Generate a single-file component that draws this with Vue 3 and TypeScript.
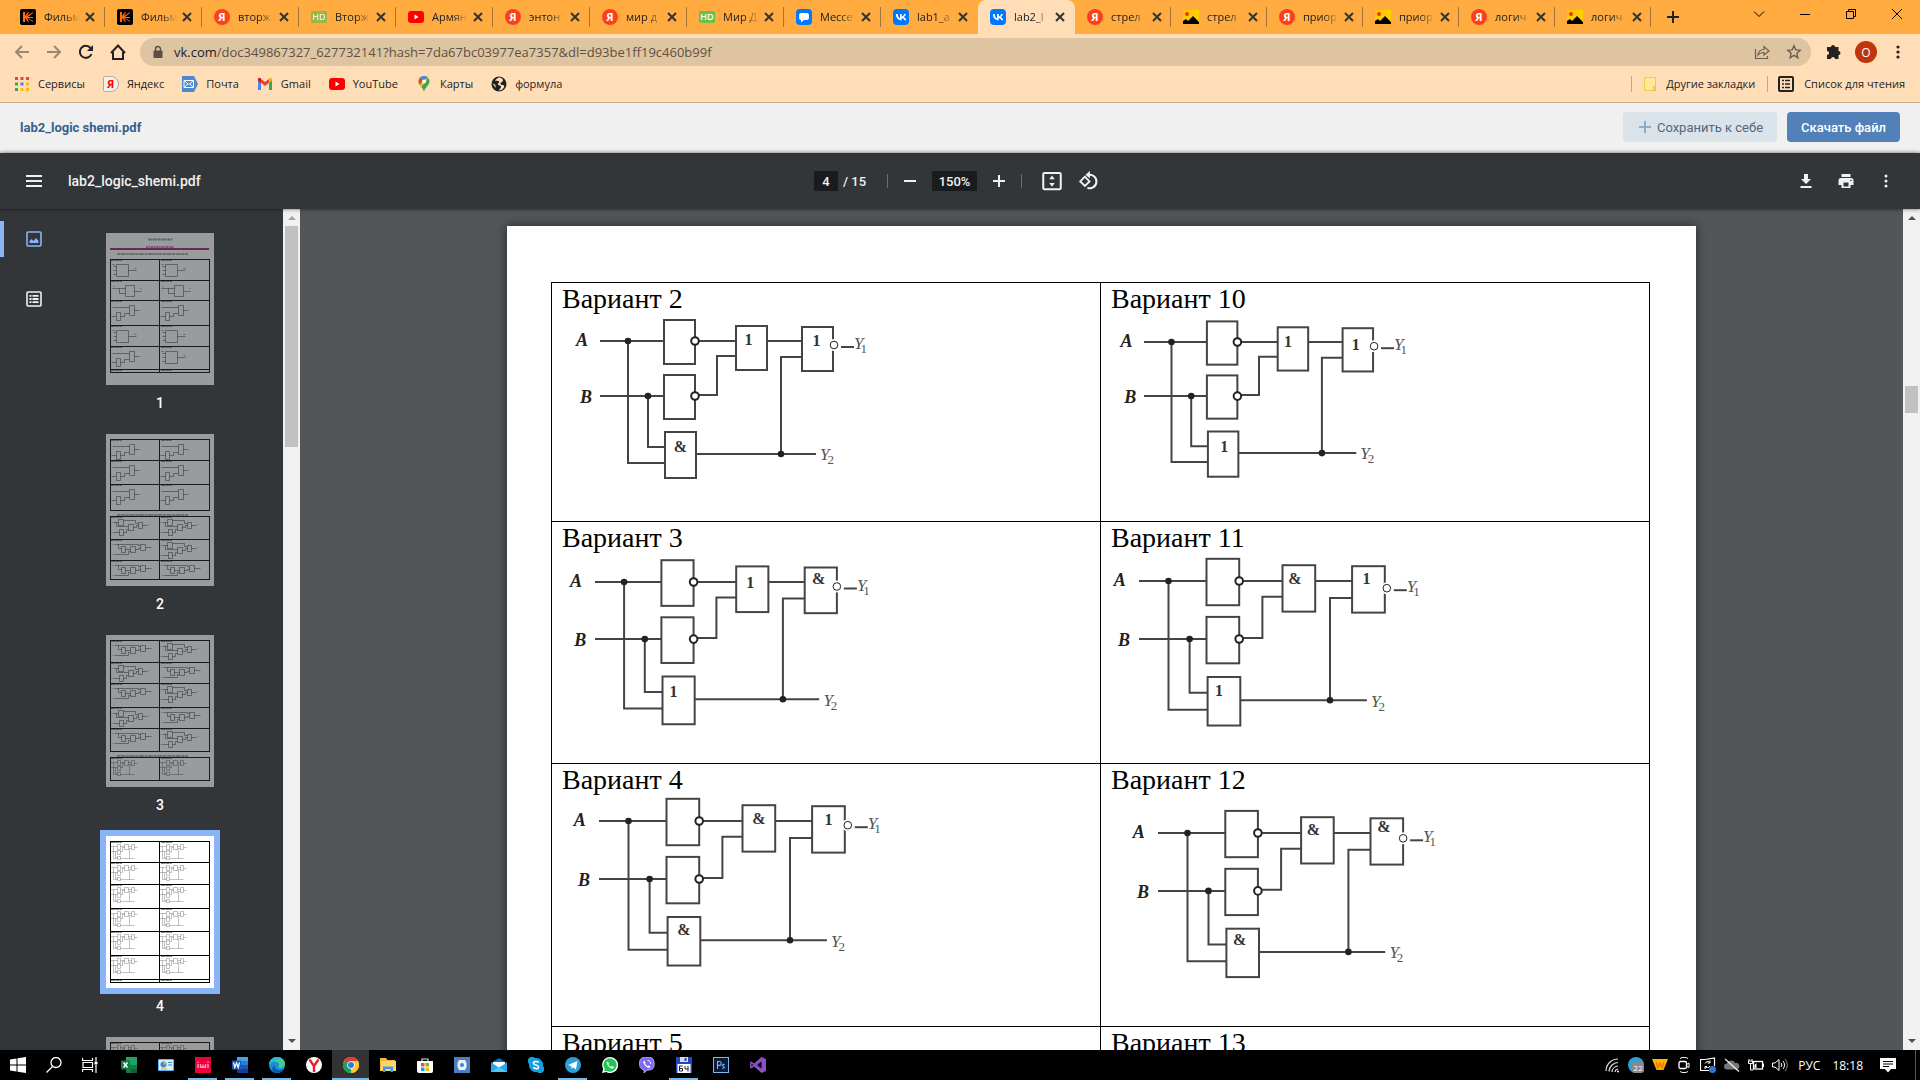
<script setup lang="ts">
interface Tab { icon: string; title: string; active?: boolean }
interface Gate { sign: string; dx: number; dy: number }
interface Circuit { x: number; y: number; scale: number; gates: [Gate, Gate, Gate]; bubble: [number, number] }
interface Variant { name: string; circuit?: Circuit }
interface Row { height: number; cells: Variant[] }
interface Thumb { page: number; bands: number[][]; kinds: string[][]; captions: number[]; title?: boolean; current?: boolean }
interface TaskItem { icon: string; label: string; running?: boolean; focused?: boolean }

const icons: Record<string, string> = {
  kino: '<rect width="16" height="16" rx="2" fill="#000"/><path d="M3 3h2v4l3-4h1L7 7l6-4v1L8 8l5 0v1H8l5 3v1L7 9l2 4H8L5 9v4H3z" fill="#ff6a13"/>',
  youtube: '<rect y="2" width="16" height="12" rx="3" fill="#f00"/><path d="M6.500 5.500v5l4-2.500z" fill="#fff"/>',
  msg: '<rect width="16" height="16" rx="4" fill="#07f"/><path d="M5 4h6a2 2 0 0 1 2 2v3a2 2 0 0 1-2 2H8l-3 2.500V11a2 2 0 0 1-2-2V6a2 2 0 0 1 2-2z" fill="#fff"/>',
  vk: '<rect width="16" height="16" rx="4" fill="#07f"/><path d="M8.700 11.300C5 11.300 3 8.900 2.900 5h1.800c.1 2.800 1.300 4 2.300 4.300V5h1.700v2.500c1-.1 2.100-1.300 2.500-2.500h1.700c-.3 1.500-1.400 2.600-2.300 3.100.9.400 2.200 1.400 2.700 3.200h-1.900c-.4-1.200-1.400-2.100-2.700-2.200v2.200z" fill="#fff"/>',
  pics: '<rect y="1" width="16" height="14" fill="#fc0"/><circle cx="4" cy="5" r="2" fill="#f22"/><path d="M0 15v-3l3-2 2 2 5-5 6 6v2z" fill="#000"/>',
  back: '<path d="M15 8H2M8 2L2 8l6 6" fill="none" stroke="#9a8770" stroke-width="2"/>',
  forward: '<path d="M1 8h13M8 2l6 6-6 6" fill="none" stroke="#9a8770" stroke-width="2"/>',
  reload: '<path d="M13.500 10A6 6 0 1 1 12.500 4" fill="none" stroke="#222" stroke-width="2"/><path d="M15 1v6H9z" fill="#222"/>',
  home: '<path d="M3 8v7h10V8M1 9l7-7.500L15 9" fill="none" stroke="#222" stroke-width="2"/>',
  lock: '<rect x="3.500" y="6.500" width="9" height="7.500" rx="1" fill="#5a4f43"/><path d="M5.500 7V5a2.500 2.500 0 0 1 5 0v2" fill="none" stroke="#5a4f43" stroke-width="1.500"/>',
  share: '<path d="M1.500 5v9.500h12V12" fill="none" stroke="#6b5f50" stroke-width="1.200"/><path d="M4 11c.5-4 3-5.500 6-5.500V2.500l5 4.500-5 4V8.500C7.500 8.500 5.500 9 4 11z" fill="none" stroke="#6b5f50" stroke-width="1.200"/>',
  star: '<path d="M8 1.800l1.800 4.100 4.400.4-3.300 3 1 4.400L8 11.400l-3.900 2.300 1-4.400-3.300-3 4.400-.4z" fill="none" stroke="#6b5f50" stroke-width="1.400"/>',
  puzzle: '<path d="M6 3a2 2 0 0 1 4 0h3.500v4a2 2 0 0 1 0 4v4H10a2 2 0 0 0-4 0H2v-4a2 2 0 0 0 0-4V3z" fill="#222"/>',
  dots: '<g fill="#222"><circle cx="8" cy="3" r="1.600"/><circle cx="8" cy="8" r="1.600"/><circle cx="8" cy="13" r="1.600"/></g>',
  apps: '<path d="M1 1h3v3H1zM6.500 1h3v3h-3zM12 1h3v3h-3z" fill="#ea4335"/><path d="M1 6.500h3v3H1z" fill="#34a853"/><path d="M6.500 6.500h3v3h-3z" fill="#4285f4"/><path d="M12 6.500h3v3h-3zM6.500 12h3v3h-3zM12 12h3v3h-3z" fill="#fbbc05"/><path d="M1 12h3v3H1z" fill="#34a853"/>',
  mail: '<path d="M0 0h12l4 8-4 8H0z" fill="#4a8ad4"/><path d="M2 4.500h9.500v7H2z" fill="none" stroke="#fff"/><path d="M2 4.500L6.800 8.500l4.700-4M2 11.500L5.800 8M11.500 11.500L8 8" fill="none" stroke="#fff"/>',
  gmail: '<path d="M1 4v10h3V7z" fill="#4285f4"/><path d="M12 7v7h3V4z" fill="#34a853"/><path d="M1 4.500L8 10l7-5.500V3.500a1.500 1.500 0 0 0-2.500-1L8 6 3.500 2.500A1.500 1.500 0 0 0 1 3.500z" fill="#ea4335"/><path d="M12 3v4l3-2.500v-1a1.500 1.500 0 0 0-3-.5z" fill="#fbbc04"/><path d="M1 4.500L4 7V3a1.500 1.500 0 0 0-3 .5z" fill="#c5221f"/>',
  maps: '<path d="M8 0a5.500 5.500 0 0 0-5.500 5.500C2.500 9 7 11 8 16c1-5 5.500-7 5.500-10.500A5.500 5.500 0 0 0 8 0z" fill="#34a853"/><path d="M8 0a5.500 5.500 0 0 0-4 1.700L8 5.500l3.500-4.200A5.500 5.500 0 0 0 8 0z" fill="#4285f4"/><path d="M4 1.700C2.500 3.500 2 6 3.500 8.500L8 5.500z" fill="#ea4335"/><path d="M3.500 8.800L8 4l4-2.500C11 5 7 9 5.500 11z" fill="#fbbc04"/><circle cx="8" cy="5.500" r="2" fill="#fff"/>',
  globe: '<circle cx="8" cy="8" r="7.500" fill="#202124"/><path d="M9 1.500c-3 0-3.500 2-5 3 1 1 3-.5 4 1s-2 1.500-1 3 3 .5 3 2.500-2 1.500-2 3.500c3 0 6-3 5-5-1-1-3 0-3.500-1.500S12 6 12 4.500 10.500 2 9 1.500z" fill="#ffdeb7"/><path d="M1.500 7l3 2v3z" fill="#ffdeb7"/>',
  folder: '<path d="M2.500 1.500h11v13h-11z" fill="#ffe999" stroke="#f0cc50"/><path d="M11.500 10.500h2v4h-2z" fill="#ffe08a" stroke="#e6bd40"/>',
  list: '<rect x="1" y="1" width="14" height="14" rx="1" fill="none" stroke="#222" stroke-width="2"/><path d="M4 4.500h2M4 8h2M4 11.500h2M7 4.500h5M7 8h5M7 11.500h5" stroke="#222" stroke-width="1.600"/>',
  menu: '<path d="M0 3h16M0 8h16M0 13h16" stroke="#f1f1f1" stroke-width="2"/>',
  minus: '<path d="M2 8h12" stroke="#f1f1f1" stroke-width="2"/>',
  plus: '<path d="M2 8h12M8 2v12" stroke="#f1f1f1" stroke-width="2"/>',
  fit: '<rect x="1" y="1.500" width="14" height="13" rx="1" fill="none" stroke="#f1f1f1" stroke-width="1.600"/><path d="M8 3.500L10.200 6.500H5.800zM8 12.500L5.800 9.500h4.400z" fill="#f1f1f1"/>',
  rotate: '<path d="M5.500 4.500L9.200 8.300 5.500 12 1.800 8.300z" fill="none" stroke="#f1f1f1" stroke-width="1.500"/><path d="M8 3.200a5.400 5.400 0 1 1-.5 10.300" fill="none" stroke="#f1f1f1" stroke-width="1.600"/><path d="M9.500 0v6L6 3z" fill="#f1f1f1"/>',
  download: '<path d="M6 1h4v5h3l-5 5-5-5h3zM2.500 13h11v2h-11z" fill="#f1f1f1"/>',
  print: '<path d="M3.500 1h9v3h-9zM3 5h10a2.500 2.500 0 0 1 2.500 2.500V12h-3v3h-9v-3h-3V7.500A2.500 2.500 0 0 1 3 5zm2.500 4.500v4h5v-4z" fill="#f1f1f1"/><circle cx="13" cy="7.500" r=".8" fill="#323639"/>',
  more: '<g fill="#f1f1f1"><circle cx="8" cy="3" r="1.500"/><circle cx="8" cy="8" r="1.500"/><circle cx="8" cy="13" r="1.500"/></g>',
  thumbs: '<rect x="1" y="1" width="14" height="14" rx="1" fill="none" stroke="#8ab4f8" stroke-width="1.600"/><path d="M3.500 12V10l2-2 2 2 2.500-3 2.500 3v2z" fill="#8ab4f8"/>',
  outline: '<rect x="1" y="1" width="14" height="14" rx="1" fill="none" stroke="#f1f1f1" stroke-width="1.600"/><path d="M3.500 4.800h2M3.500 8h2M3.500 11.200h2M6.500 4.800h6M6.500 8h6M6.500 11.200h6" stroke="#f1f1f1" stroke-width="1.800"/>',
  windows: '<path d="M0 2.500L6.500 1.500v6H0zM7.500 1.300L16 0v7.500H7.500zM0 8.500h6.500v6L0 13.500zM7.500 8.500H16V16l-8.500-1.300z" fill="#fff"/>',
  search: '<circle cx="10" cy="5.500" r="5" fill="none" stroke="#fff" stroke-width="1.300"/><path d="M6.500 9.500L.5 15.500" stroke="#fff" stroke-width="1.300"/>',
  taskview: '<path d="M.5 1v2.500h10V1M.5 15v-2.500h10V15M1 5.500h9.500v5H1zM14 0v4M14 8v8" fill="none" stroke="#fff" stroke-width="1.200"/><path d="M12.500 4.500h3v3h-3z" fill="#fff"/>',
  excel: '<path d="M5 0h11v16H5z" fill="#21a366"/><path d="M5 8h11v8H5z" fill="#107c41"/><path d="M10 12h6v4h-6z" fill="#185c37"/><path d="M0 3.500h9v9H0z" fill="#107c41"/><path d="M2.500 5.500l4 5M6.500 5.500l-4 5" stroke="#fff" stroke-width="1.500"/>',
  panel: '<rect y="2" width="16" height="12" rx="1" fill="#5cb6ec"/><rect x="1" y="3" width="14" height="10" fill="#d5efff"/><circle cx="5.500" cy="7.500" r="3" fill="#2d8fdc"/><path d="M5.500 7.500v-3a3 3 0 0 1 3 3z" fill="#f7a11a"/><path d="M10 5.500h4M10 8h4" stroke="#2d8fdc"/><path d="M3 12h6" stroke="#f7a11a"/>',
  ivi: '<rect width="16" height="16" fill="#ea003d"/><path d="M3 7v4M13 7v4M5.500 7v3.300h2.500V7.500M8 10.300h2.500V7" fill="none" stroke="#ff9ab4" stroke-width="1.400"/><circle cx="3" cy="5.200" r=".8" fill="#ff9ab4"/><circle cx="13" cy="5.200" r=".8" fill="#ff9ab4"/>',
  word: '<path d="M5 0h11v16H5z" fill="#41a5ee"/><path d="M5 4h11v12H5z" fill="#2b7cd3"/><path d="M5 8h11v8H5z" fill="#185abd"/><path d="M5 12h11v4H5z" fill="#103f91"/><path d="M0 3.500h9v9H0z" fill="#185abd"/><path d="M1.500 5.500l1.300 5L4.500 6l1.700 4.500 1.300-5" fill="none" stroke="#fff" stroke-width="1.200"/>',
  edge: '<circle cx="8" cy="8" r="8" fill="#1b8fd8"/><path d="M0 7.500C.5 3 4 0 8 0c5 0 8 3.500 8 6.500S13.500 11 11 11c-2 0-1.500-1.500-1-2.500C10.500 6 8 4.500 5.500 4.500S.7 6 0 7.500z" fill="#3fd08a"/><path d="M0 7.500C.5 3 4 0 8 0c2 0 4 .7 5.500 2C9 2 3 3 0 7.500z" fill="#2fb5e0"/><path d="M5.500 8c-.5 4 3.500 6.500 9 4-2 3-5 4-7.500 4-4-1-5-5.500-1.500-8z" fill="#0c59a4"/>',
  yandex: '<circle cx="8" cy="8" r="8" fill="#fff"/><path d="M3.500 2.500L8 9v6M12.500 2.500L8 9" fill="none" stroke="#e8202a" stroke-width="2.400"/>',
  chrome: '<circle cx="8" cy="8" r="8" fill="#fc4"/><path d="M8 8L1 4a8 8 0 0 1 14 0z" fill="#e33b2e"/><path d="M8 8v8A8 8 0 0 1 1 4z" fill="#1fa155"/><path d="M8 16a8 8 0 0 0 7-12H8z" fill="#fcc934"/><circle cx="8" cy="8" r="3.800" fill="#fff"/><circle cx="8" cy="8" r="3" fill="#2a7de1"/>',
  explorer: '<path d="M0 1h6l1.500 2H15v11H0z" fill="#f5b93a"/><path d="M1 4h15v10H1z" fill="#ffd766"/><path d="M3 15V9.500h10V15h-2.500v-3h-5v3z" fill="#3b9be8"/>',
  store: '<path d="M5 4V2h6v2" fill="none" stroke="#ddd" stroke-width="1.200"/><path d="M0 4h16v10a2 2 0 0 1-2 2H2a2 2 0 0 1-2-2z" fill="#fff"/><path d="M4 6h3.500v3.500H4z" fill="#f25022"/><path d="M8.500 6H12v3.500H8.500z" fill="#7fba00"/><path d="M4 10.500h3.500V14H4z" fill="#00a4ef"/><path d="M8.500 10.500H12V14H8.500z" fill="#ffb900"/>',
  cam: '<rect width="16" height="16" fill="#4b80c0"/><path d="M5 3h6l1.500 3v4L11 13H5l-1.500-3V6z" fill="#e8f1fa"/><circle cx="8" cy="8" r="2" fill="#4b80c0"/>',
  letter: '<path d="M0 6l8-5 8 5v9H0z" fill="#0f6cbd"/><path d="M2 5h12v6H2z" fill="#fff"/><path d="M0 5.500l8 5 8-5V15H0z" fill="#28a8ea"/><path d="M0 15l8-5 8 5z" fill="#50c8f4"/>',
  skype: '<path d="M8 1a7 7 0 0 1 7 8 4 4 0 0 1-6 6A7 7 0 0 1 1 7a4 4 0 0 1 6-6z" fill="#159fe0"/><path d="M10.500 5.500C9.500 4 5.500 4 5.500 6.200S10.500 7.500 10.500 10 6.500 12 5.300 10.300" fill="none" stroke="#fff" stroke-width="1.600"/>',
  telegram: '<circle cx="8" cy="8" r="8" fill="#2ba0d8"/><path d="M3 8l9.500-4L11 12.500 8 10.300l-1.500 1.500-.2-2.500z" fill="#fff"/>',
  whatsapp: '<path d="M8 0a8 8 0 1 1-3.800 15L0 16l1.200-4A8 8 0 0 1 8 0z" fill="#fff"/><path d="M8 1.300a6.700 6.700 0 1 1-3.500 12.400L2 14.300l.7-2.400A6.700 6.700 0 0 1 8 1.300z" fill="#25c25a"/><path d="M5.500 4.500c-1 .5-1 2 0 3.500 1.300 2 3 3.300 4.800 3.500 1 0 1.700-.8 1.600-1.500l-1.700-.9-.9.9C8 9.500 7 8.500 6.300 7.200l.8-.8z" fill="#fff"/>',
  viber: '<path d="M3 1c3-1.300 7-1.300 10 0 2.500 2 3 8 1 10.500-1.500 1.500-4 1.700-6 1.700L5 16v-3.200C1 12 .5 9.500.5 6.500.5 4 1 2 3 1z" fill="#7d6af0" stroke="#c9c0ff" stroke-width=".8"/><path d="M5 3.500c-1 .5-1 2 0 3.500 1.300 2.300 3 3.500 4.800 4 1 0 1.700-.8 1.600-1.500L9.700 8.300l-.9.900C7.500 8.700 6.500 7.700 6 6.500l.7-.8z" fill="#fff"/><path d="M8.500 3.500c2 0 3.300 1.500 3.300 3.500" fill="none" stroke="#fff"/>',
  floppy: '<path d="M0 0h16v16H0z" fill="#2147c7"/><path d="M4 0h8v5H4z" fill="#d8dce8"/><path d="M8.500 1h2v3h-2z" fill="#2147c7"/><path d="M1.500 7h13v9h-13z" fill="#fff"/><path d="M6.500 9h-3v5h3v-2.500h-3M9 9v3h3.500M12 9v5.500" fill="none" stroke="#222"/>',
  ps: '<rect x=".5" y=".5" width="15" height="15" fill="#0a1a3a" stroke="#7fb8f0"/><path d="M4.500 12V4.500h1.800a1.900 1.900 0 0 1 0 3.900H4.500M11.800 7.500c-2-.8-3 .9-1.500 1.700s1.500 2.600-1 1.900" fill="none" stroke="#7fb8f0" stroke-width="1.100"/>',
  vs: '<path d="M11.500 0L16 2v12l-4.500 2L4 9.500 1.500 11.500 0 10.800V5.200l1.500-.7L4 6.500zM11.500 4.500L7 8l4.500 3.500zM1.500 6.300v3.400L3 8z" fill="#8b4fc4" fill-rule="evenodd"/>',
  wifi: '<path d="M2 14A12 12 0 0 1 14 2M5 14.500A9.500 9.500 0 0 1 14 5.500M8 15a6.500 6.500 0 0 1 6-6M11 15a3.500 3.500 0 0 1 3-3" fill="none" stroke="#ddd" stroke-width="1.200"/><circle cx="14" cy="14.500" r="1" fill="#fff"/>',
  wtri: '<path d="M0 2h16L11.500 13h-7z" fill="#ffb300"/><path d="M4 5l2 6 2-5 2 5 2-6" fill="none" stroke="#f07800" stroke-width="1.400"/>',
  meet: '<rect x="3" y="4.500" width="7.500" height="7" rx="1.500" fill="none" stroke="#fff" stroke-width="1.300"/><path d="M10.500 7.500L13 6v4.500l-2.500-1.200M4 1.500c2-1.500 6-1.500 8 0M4 14.500c2 1.500 6 1.500 8 0" fill="none" stroke="#fff"/>',
  sync: '<path d="M14.500 9V1L5 2.500H.5v11H9" fill="none" stroke="#fff" stroke-width="1.200"/><path d="M5 6.500a3 3 0 0 1 5-1M10 3.500v2.500H7.500M10 9a3 3 0 0 1-5 .5M5 12V9.500h2" fill="none" stroke="#fff"/><circle cx="12.500" cy="12.500" r="3.500" fill="#2f78d0"/>',
  cloud: '<path d="M3 12.500a3 3 0 0 1 0-6C4 3 9.500 2.500 11 6a3.300 3.300 0 0 1 2 6.500z" fill="#777"/><path d="M1 2l14 12.500" stroke="#eee" stroke-width="1.300"/>',
  battery: '<rect x="5.500" y="4.500" width="9" height="7.500" fill="none" stroke="#fff" stroke-width="1.300"/><path d="M15 6.500h1v3.500h-1zM8.500 6v5H6.500V8z" fill="#fff"/><path d="M1 2v2M4 2v2M.5 4h4v2.500h-4zM2.500 6.500V13H5" fill="none" stroke="#fff"/>',
  sound: '<path d="M.5 6h2.500l4-3.500v11L3 10H.5zM9 6a3 3 0 0 1 0 4M11 4a6 6 0 0 1 0 8" fill="none" stroke="#fff"/><path d="M13 2a9 9 0 0 1 0 12" fill="none" stroke="#888"/>',
  notice: '<path d="M0 1h16v11h-5l-3 3.500L5 12H0z" fill="#fff"/><path d="M3 4.500h10M3 7h10M3 9.500h6" stroke="#000" stroke-width="1.200"/>',
  chevron: '<path d="M3 5.500l5 5 5-5" fill="none" stroke="#000"/>',
  minimize: '<path d="M3 8.500h10" stroke="#000"/>',
  restore: '<path d="M3.500 5.500h7v7h-7zM5.500 5.500v-2h7v7h-2" fill="none" stroke="#000"/>',
  close: '<path d="M3 3l10 10M13 3L3 13" fill="none" stroke="#000"/>',
  newtab: '<path d="M2 8h12M8 2v12" stroke="#222" stroke-width="2"/>',
  cross: '<path d="M4 4l8 8M12 4l-8 8" stroke="#333" stroke-width="2"/>',
  save: '<path d="M2 8h12M8 2v12" stroke="#8fabc9" stroke-width="2"/>',
}

const tabs: Tab[] = [
  { icon: 'kino', title: 'Фильм' }, { icon: 'kino', title: 'Фильм' },
  { icon: 'ya', title: 'вторж' }, { icon: 'hd-faded', title: 'Вторж' },
  { icon: 'youtube', title: 'Армян' }, { icon: 'ya', title: 'энтон' },
  { icon: 'ya', title: 'мир д' }, { icon: 'hd', title: 'Мир Д' },
  { icon: 'msg', title: 'Мессе' }, { icon: 'vk', title: 'lab1_a' },
  { icon: 'vk', title: 'lab2_l', active: true }, { icon: 'ya', title: 'стрел' },
  { icon: 'pics', title: 'стрел' }, { icon: 'ya', title: 'приор' },
  { icon: 'pics', title: 'приор' }, { icon: 'ya', title: 'логич' },
  { icon: 'pics', title: 'логич' },
]

const bookmarks = [
  { icon: 'apps', title: 'Сервисы' }, { icon: 'ya-tag', title: 'Яндекс' },
  { icon: 'mail', title: 'Почта' }, { icon: 'gmail', title: 'Gmail' },
  { icon: 'youtube', title: 'YouTube' }, { icon: 'maps', title: 'Карты' },
  { icon: 'globe', title: 'формула' },
]

const windowControls = [
  { icon: 'chevron', label: 'Поиск вкладок' }, { icon: 'minimize', label: 'Свернуть' },
  { icon: 'restore', label: 'Восстановить' }, { icon: 'close', label: 'Закрыть' },
]

const gate = (sign: string, dx: number, dy: number): Gate => ({ sign, dx, dy })

const rows: Row[] = [
  { height: 239, cells: [
    { name: 'Вариант 2', circuit: { x: 48, y: 25, scale: 1, bubble: [1, 18], gates: [gate('1', -3, 14), gate('1', -1, 14), gate('&', 0, 15)] } },
    { name: 'Вариант 10', circuit: { x: 43, y: 26, scale: 0.983, bubble: [1, 18], gates: [gate('1', -5, 15), gate('1', -2, 17), gate('1', 1, 15)] } },
  ] },
  { height: 242, cells: [
    { name: 'Вариант 3', circuit: { x: 43, y: 27, scale: 1.038, bubble: [0, 19], gates: [gate('1', -2, 17), gate('&', -2, 11), gate('1', -5, 15)] } },
    { name: 'Вариант 11', circuit: { x: 38, y: 26, scale: 1.055, bubble: [2, 22], gates: [gate('&', -4, 14), gate('1', -2, 13), gate('1', -5, 14)] } },
  ] },
  { height: 263, cells: [
    { name: 'Вариант 4', circuit: { x: 47, y: 24, scale: 1.055, bubble: [3, 19], gates: [gate('&', 0, 14), gate('1', 0, 14), gate('&', 0, 13)] } },
    { name: 'Вариант 12', circuit: { x: 57, y: 36, scale: 1.052, bubble: [0, 20], gates: [gate('&', -4, 13), gate('&', -3, 9), gate('&', -3, 11)] } },
  ] },
  { height: 243, cells: [{ name: 'Вариант 5' }, { name: 'Вариант 13' }] },
]

/** Lays a circuit out from the left end of its A wire. */
function layout(c: Circuit) {
  const px = (v: number) => Math.round((c.x + v * c.scale) * 10) / 10
  const py = (v: number) => Math.round((c.y + v * c.scale) * 10) / 10
  const box = (x: number, y: number, h = 44) => ({ x: px(x), y: py(y), w: 31 * c.scale, h: h * c.scale })
  const boxes = [box(64, -21), box(64, 34), box(136, -15), box(202, -14), box(65, 91, 46)]
  const wires = [
    `M${px(0)} ${py(0)}H${px(64)}`, `M${px(0)} ${py(55)}H${px(64)}`,
    `M${px(28)} ${py(0)}V${py(122)}H${px(65)}`, `M${px(48)} ${py(55)}V${py(106)}H${px(65)}`,
    `M${px(99)} ${py(0)}H${px(136)}`, `M${px(99)} ${py(54)}H${px(117)}V${py(15)}H${px(136)}`,
    `M${px(167)} ${py(0)}H${px(202)}`, `M${px(96)} ${py(113)}H${px(216)}`,
    `M${px(181)} ${py(113)}V${py(16)}H${px(202)}`,
  ].join('')
  const last = boxes[3]
  const out = { x: last.x + last.w + c.bubble[0], y: last.y + c.bubble[1] }
  const signs = [boxes[2], boxes[3], boxes[4]].map((b, i) => ({
    text: c.gates[i].sign, x: b.x + b.w / 2 + c.gates[i].dx, y: b.y + c.gates[i].dy + 5,
  }))
  return {
    boxes, wires, out, signs,
    dots: [[28, 0], [48, 55], [181, 113]].map(([x, y]) => [px(x), py(y)]),
    bubbles: [[95, 0], [95, 55]].map(([x, y]) => [px(x), py(y)]),
    a: [px(-24), py(5)], b: [px(-20), py(62)], y2: [px(220), py(119)],
  }
}

const minis: Record<string, string> = {
  g: 'M6 5h12v12H6zM3 7h3M3 11h3M3 15h3M18 11h8M2 5h2M24 9h2',
  n: 'M15 5h9v11h-9zM2 8h13M9 8v5h6M24 11h7M3 6h1M30 8h1',
  h: 'M19 5h5v10h-5zM2 7h17M24 10h5M6 12h4v8H6zM1 16h5M10 16h4v-3h5',
  j: 'M8 3h5v6H8zM18 8h5v6h-5zM28 6h4v6h-4zM9 13h4v6H9zM3 6h5M6 6v4h12M13 4h12v3h3M3 16h6M13 16h3v-3h2M23 11h3v-2h2M32 9h5M1 6h1M1 16h1M38 8h1',
  i: 'M11 7h4v6h-4zM20 7h5v6h-5zM30 5h5v6h-5zM4 5h24v1h2M8 5v4h3M15 10h5M4 15h14v-3h2M25 10h3v-1h2M35 8h6M2 5h1M2 15h1',
  d: 'M10 3h3v5h-3zM10 9h3v4h-3zM10 15h3v3h-3zM17 3h4v5h-4zM24 3h3v5h-3zM3 5h7M3 10h7M6 5v12h4M8 10v6h2M13 5h4M13 10h2V6h2M21 5h3M27 6h3M13 17h14M22 17V7h2',
}

const thumbs: Thumb[] = [
  { page: 1, title: true, bands: [[26, 47, 67, 92, 113, 136, 139]], captions: [21], kinds: [['g', 'g'], ['n', 'n'], ['h', 'h'], ['g', 'g'], ['h', 'g'], []] },
  { page: 2, bands: [[5, 26, 50, 76], [82, 105, 126, 145]], captions: [81], kinds: [['h', 'h'], ['h', 'h'], ['h', 'h'], ['j', 'j'], ['i', 'j'], ['i', 'i']] },
  { page: 3, bands: [[5, 27, 48, 72, 93, 116], [122, 145]], captions: [121], kinds: [['i', 'j'], ['j', 'i'], ['i', 'j'], ['j', 'i'], ['i', 'j'], ['d', 'd']] },
  { page: 4, current: true, bands: [[5, 26, 48, 72, 95, 119, 143, 146]], captions: [], kinds: [['d', 'd'], ['d', 'd'], ['d', 'd'], ['d', 'd'], ['d', 'd'], ['d', 'd'], []] },
  { page: 5, bands: [[5, 27, 50]], captions: [], kinds: [['d', 'd'], ['d', 'd']] },
]

/** Top edge of every table row on a thumbnail, in reading order. */
const rowTops = (t: Thumb) => t.bands.flatMap((b) => b.slice(0, -1))

const tasks: TaskItem[] = [
  { icon: 'excel', label: 'Excel' }, { icon: 'panel', label: 'Панель управления' },
  { icon: 'ivi', label: 'ivi', running: true }, { icon: 'word', label: 'Word', running: true },
  { icon: 'edge', label: 'Edge', running: true }, { icon: 'yandex', label: 'Яндекс' },
  { icon: 'chrome', label: 'Chrome', running: true, focused: true }, { icon: 'explorer', label: 'Проводник' },
  { icon: 'store', label: 'Store' }, { icon: 'cam', label: 'Камера' },
  { icon: 'letter', label: 'Почта' }, { icon: 'skype', label: 'Skype' },
  { icon: 'telegram', label: 'Telegram', running: true }, { icon: 'whatsapp', label: 'WhatsApp' },
  { icon: 'viber', label: 'Viber' }, { icon: 'floppy', label: 'Total Commander', running: true },
  { icon: 'ps', label: 'Photoshop' }, { icon: 'vs', label: 'Visual Studio' },
]
const system = ['windows', 'search', 'taskview']
const trayIcons = ['wtri', 'meet', 'sync', 'cloud', 'battery', 'sound']
</script>

<template>
  <div class="screen">
    <header class="browser">
      <div class="tabstrip">
        <div v-for="(t, i) in tabs" :key="i" class="tab" :class="{ active: t.active, plain: tabs[i + 1]?.active }">
          <span v-if="t.icon === 'ya'" class="ya">Я</span>
          <span v-else-if="t.icon.startsWith('hd')" class="hd" :class="{ faded: t.icon === 'hd-faded' }">HD</span>
          <svg v-else class="ic" viewBox="0 0 16 16" v-html="icons[t.icon]"></svg>
          <span class="tab-title">{{ t.title }}</span>
          <button class="tab-close" aria-label="Закрыть вкладку"><svg class="ic" viewBox="0 0 16 16" v-html="icons.cross"></svg></button>
        </div>
        <button class="new-tab" aria-label="Новая вкладка"><svg class="ic" viewBox="0 0 16 16" v-html="icons.newtab"></svg></button>
        <div class="window-controls">
          <button v-for="w in windowControls" :key="w.icon" :aria-label="w.label"><svg class="ic" viewBox="0 0 16 16" v-html="icons[w.icon]"></svg></button>
        </div>
      </div>

      <div class="navbar">
        <button v-for="n in ['back', 'forward', 'reload', 'home']" :key="n" class="nav" :aria-label="n"><svg class="ic" viewBox="0 0 16 16" v-html="icons[n]"></svg></button>
        <div class="omnibox">
          <svg class="ic" viewBox="0 0 16 16" v-html="icons.lock"></svg>
          <a class="url" href="#"><b>vk.com</b>/doc349867327_627732141?hash=7da67bc03977ea7357&amp;dl=d93be1ff19c460b99f</a>
          <button class="nav" aria-label="Поделиться"><svg class="ic" viewBox="0 0 16 16" v-html="icons.share"></svg></button>
          <button class="nav" aria-label="В закладки"><svg class="ic" viewBox="0 0 16 16" v-html="icons.star"></svg></button>
        </div>
        <button class="nav" aria-label="Расширения"><svg class="ic" viewBox="0 0 16 16" v-html="icons.puzzle"></svg></button>
        <button class="avatar">O</button>
        <button class="nav" aria-label="Меню"><svg class="ic" viewBox="0 0 16 16" v-html="icons.dots"></svg></button>
      </div>

      <nav class="bookmarks">
        <a v-for="b in bookmarks" :key="b.title" href="#">
          <span v-if="b.icon === 'ya-tag'" class="ya-tag">Я</span>
          <svg v-else class="ic" viewBox="0 0 16 16" v-html="icons[b.icon]"></svg>{{ b.title }}
        </a>
        <a class="other" href="#"><svg class="ic" viewBox="0 0 16 16" v-html="icons.folder"></svg>Другие закладки</a>
        <a class="reading" href="#"><svg class="ic" viewBox="0 0 16 16" v-html="icons.list"></svg>Список для чтения</a>
      </nav>
    </header>

    <div class="doc-header">
      <a class="doc-title" href="#">lab2_logic shemi.pdf</a>
      <button class="btn"><svg class="ic" viewBox="0 0 16 16" v-html="icons.save"></svg>Сохранить к себе</button>
      <button class="btn primary">Скачать файл</button>
    </div>

    <div class="toolbar">
      <div class="side">
        <button class="tool" aria-label="Меню"><svg class="ic" viewBox="0 0 16 16" v-html="icons.menu"></svg></button>
        <span class="file-name">lab2_logic_shemi.pdf</span>
      </div>
      <div class="center">
        <input class="page-no" value="4" aria-label="Страница">
        <span class="page-count">/ 15</span>
        <i class="rule"></i>
        <button class="tool" aria-label="Уменьшить"><svg class="ic" viewBox="0 0 16 16" v-html="icons.minus"></svg></button>
        <input class="zoom" value="150%" aria-label="Масштаб">
        <button class="tool" aria-label="Увеличить"><svg class="ic" viewBox="0 0 16 16" v-html="icons.plus"></svg></button>
        <i class="rule"></i>
        <button class="tool wide" aria-label="По размеру страницы"><svg viewBox="0 0 16 16" v-html="icons.fit"></svg></button>
        <button class="tool turn" aria-label="Повернуть"><svg viewBox="0 0 16 16" v-html="icons.rotate"></svg></button>
      </div>
      <div class="side end">
        <button class="tool" aria-label="Скачать"><svg class="ic" viewBox="0 0 16 16" v-html="icons.download"></svg></button>
        <button class="tool" aria-label="Печать"><svg class="ic" viewBox="0 0 16 16" v-html="icons.print"></svg></button>
        <button class="tool" aria-label="Ещё"><svg class="ic" viewBox="0 0 16 16" v-html="icons.more"></svg></button>
      </div>
    </div>

    <main class="viewer">
      <aside class="sidebar">
        <div class="rail">
          <button class="rail-btn on" aria-label="Миниатюры"><svg class="ic" viewBox="0 0 16 16" v-html="icons.thumbs"></svg></button>
          <button class="rail-btn" aria-label="Структура"><svg class="ic" viewBox="0 0 16 16" v-html="icons.outline"></svg></button>
        </div>
        <div class="thumbs">
          <template v-for="t in thumbs" :key="t.page">
            <button class="thumb" :class="{ current: t.current }" :aria-label="`Страница ${t.page}`">
              <svg viewBox="0 0 108 152">
                <g v-if="t.title">
                  <path d="M42 6.500h25" stroke="#1f4e79" stroke-width="2" stroke-dasharray="2 .5" opacity=".6" />
                  <path d="M40 14h28" stroke="#a02b7a" stroke-width="2" stroke-dasharray="2 .5" opacity=".6" />
                  <path d="M4 16h99" stroke="#a3207a" stroke-width="2" />
                </g>
                <path v-for="c in t.captions" :key="c" :d="`M11 ${c}h71`" stroke="#000" stroke-width="1.500" stroke-dasharray="3 .6 5 .6" opacity=".45" />
                <g v-for="(y, r) in rowTops(t)" :key="y">
                  <path :d="`M5 ${y + 1.5}h11M55 ${y + 1.5}h11`" stroke="#000" stroke-dasharray="4 .5" opacity=".45" />
                  <path v-for="(k, c) in t.kinds[r]" :key="c" :d="minis[k]" :transform="`translate(${(k === 'd' ? 1.5 : 4.5) + c * 49} ${y + 0.5})`" fill="none" stroke="#000" stroke-width=".8" :opacity="t.current ? 0.3 : k === 'd' ? 0.4 : 0.55" />
                </g>
                <g v-for="b in t.bands" :key="b[0]" fill="none" stroke="#000">
                  <path v-for="y in b" :key="y" :d="`M4 ${y + 0.5}h100`" />
                  <path :d="`M4.500 ${b[0]}V${b[b.length - 1]}M53.500 ${b[0]}V${b[b.length - 1]}M103.500 ${b[0]}V${b[b.length - 1]}`" />
                </g>
              </svg>
            </button>
            <span class="thumb-no">{{ t.page }}</span>
          </template>
        </div>
        <div class="scrollbar"><i class="arrow up"></i><i class="knob side-knob"></i><i class="arrow down"></i></div>
      </aside>

      <section class="canvas">
        <article class="page">
          <table>
            <tbody>
              <tr v-for="(row, r) in rows" :key="r" :style="{ height: row.height + 'px' }">
                <td v-for="v in row.cells" :key="v.name">
                  <p class="variant">{{ v.name }}</p>
                  <svg v-if="v.circuit" class="circuit" width="360" height="190">
                    <template v-for="c in [layout(v.circuit)]" :key="v.name">
                      <path :d="c.wires" class="line" />
                      <rect v-for="(b, i) in c.boxes" :key="i" :x="b.x" :y="b.y" :width="b.w" :height="b.h" class="line" />
                      <circle v-for="(d, i) in c.dots" :key="'d' + i" :cx="d[0]" :cy="d[1]" r="3.300" fill="#222" />
                      <circle v-for="(d, i) in c.bubbles" :key="'b' + i" :cx="d[0]" :cy="d[1]" r="3.800" class="bubble" />
                      <circle :cx="c.out.x" :cy="c.out.y" r="6" fill="#fff" />
                      <circle :cx="c.out.x" :cy="c.out.y" r="3.800" class="bubble thin" />
                      <path :d="`M${c.out.x + 7} ${c.out.y + 2}h13`" class="line" />
                      <text v-for="(s, i) in c.signs" :key="'s' + i" :x="s.x" :y="s.y" class="sign">{{ s.text }}</text>
                      <text :x="c.a[0]" :y="c.a[1]" class="input">A</text>
                      <text :x="c.b[0]" :y="c.b[1]" class="input">B</text>
                      <text :x="c.out.x + 20" :y="c.out.y + 4" class="output">Y<tspan class="sub" dx="-3" dy="4">1</tspan></text>
                      <text :x="c.y2[0]" :y="c.y2[1]" class="output">Y<tspan class="sub" dx="-2" dy="4">2</tspan></text>
                    </template>
                  </svg>
                </td>
              </tr>
            </tbody>
          </table>
        </article>
      </section>
      <div class="scrollbar"><i class="arrow up dark"></i><i class="knob page-knob"></i><i class="arrow down"></i></div>
    </main>

    <footer class="taskbar">
      <button v-for="s in system" :key="s" class="sys" :aria-label="s"><svg class="ic" viewBox="0 0 16 16" v-html="icons[s]"></svg></button>
      <div class="apps">
        <button v-for="t in tasks" :key="t.label" class="app" :class="{ running: t.running, focused: t.focused }" :aria-label="t.label"><svg class="ic" viewBox="0 0 16 16" v-html="icons[t.icon]"></svg></button>
      </div>
      <div class="tray">
        <svg class="ic" viewBox="0 0 16 16" v-html="icons.wifi"></svg>
        <span class="count"><b>22</b></span>
        <svg v-for="t in trayIcons" :key="t" class="ic" viewBox="0 0 16 16" v-html="icons[t]"></svg>
        <span class="lang">РУС</span>
        <time>18:18</time>
        <button class="notice" aria-label="Уведомления"><svg class="ic" viewBox="0 0 16 16" v-html="icons.notice"></svg></button>
      </div>
    </footer>
  </div>
</template>

<style>
body { margin: 0; }
</style>

<style scoped>
* { box-sizing: border-box; }
.screen { display: flex; flex-direction: column; height: 100vh; overflow: hidden; font-family: "Open Sans", "Noto Sans", sans-serif; font-size: 12px; color: #222; }
button { border: 0; padding: 0; background: none; font: inherit; color: inherit; display: flex; align-items: center; justify-content: center; flex: none; }
a { color: inherit; text-decoration: none; }
.ic { width: 16px; height: 16px; flex: none; display: block; }

.browser { background: #ffdeb7; border-bottom: 1px solid #c9b294; }
.tabstrip { display: flex; height: 34px; padding-left: 8px; background: #ffab40; }
.tab { position: relative; display: flex; align-items: center; width: 97px; padding-left: 12px; flex: none; }
.tab:nth-child(n+12) { width: 96px; }
.tab::after { content: ""; position: absolute; right: 0; top: 7px; width: 1px; height: 20px; background: #a37438; }
.tab.plain::after, .tab.active::after { display: none; }
.tab.active { background: #ffdeb7; border-radius: 8px 8px 0 0; }
.tab-title { width: 38px; margin-left: 8px; white-space: nowrap; font-size: 11px; line-height: 18px; mask-image: linear-gradient(90deg, #000 55%, transparent 95%); }
.ya { width: 16px; height: 16px; border-radius: 8px; background: #fc3f1d; color: #fff; font-size: 11px; font-weight: 700; line-height: 16px; text-align: center; }
.hd { width: 16px; height: 12px; border-radius: 1px; background: #6cc04a; color: #fff; font-size: 9px; font-weight: 600; line-height: 12px; text-align: center; }
.hd.faded { opacity: 0.7; }
.new-tab { width: 44px; }
.window-controls { display: flex; margin-left: auto; height: 28px; }
.window-controls button { width: 46px; }

.navbar { display: flex; align-items: center; height: 36px; padding: 0 6px; }
.nav { width: 32px; height: 28px; }
.omnibox { display: flex; align-items: center; flex: 1; height: 28px; margin: 0 6px; padding: 0 1px 0 10px; border-radius: 14px; background: #dfc4a1; }
.url { flex: 1; margin-left: 8px; font-size: 13px; color: #5d5142; white-space: nowrap; }
.url b { font-weight: 400; color: #222; }
.avatar { width: 22px; height: 22px; margin: 0 5px 0 6px; border-radius: 11px; background: #bf360c; color: #fff; }

.bookmarks { display: flex; align-items: center; height: 32px; padding: 0 15px 5px 14px; gap: 18px; font-size: 11px; }
.bookmarks a { display: flex; align-items: center; gap: 8px; white-space: nowrap; line-height: 16px; }
.ya-tag { width: 16px; height: 16px; border-radius: 2px 8px 8px 2px; background: #f4f0ec; border: 1px solid #b9aa98; color: #f00; font-size: 11px; font-weight: 700; line-height: 14px; padding-left: 3px; }
.bookmarks .other { margin-left: auto; border-left: 1px solid #c0a88a; padding-left: 10px; margin-right: -6px; }
.bookmarks .reading { border-left: 1px solid #c0a88a; padding-left: 10px; gap: 10px; }

.doc-header { display: flex; align-items: center; gap: 10px; height: 50px; flex: none; padding: 0 20px 2px; background: #f0f0f0; font-family: Roboto, "Noto Sans", sans-serif; font-size: 13px; }
.doc-title { margin-right: auto; font-weight: 700; color: #355f8f; }
.btn { height: 30px; padding: 0 14px; border-radius: 4px; background: #dae2ea; color: #55677d; font-size: 13px; gap: 4px; }
.btn.primary { background: #5181b8; color: #fff; font-weight: 500; }

.toolbar { position: relative; display: flex; align-items: center; height: 56px; flex: none; background: #323639; color: #f1f1f1; font-family: Roboto, "Noto Sans", sans-serif; font-size: 14px; font-weight: 500; box-shadow: 0 0 4px #0009; }
.side { display: flex; align-items: center; flex: 1; padding-left: 24px; }
.side.end { justify-content: flex-end; gap: 20px; padding: 0 24px 0 0; }
.file-name { margin-left: 24px; }
.tool { width: 20px; height: 20px; }
.tool svg { flex: none; }
.center { display: flex; align-items: center; padding-right: 8px; }
.center input { height: 20px; border: 0; padding: 0; background: #191b1c; color: #f1f1f1; text-align: center; font: inherit; font-size: 13px; border-radius: 0; }
.center .page-no { width: 24px; }
.page-count { width: 24px; margin: 0 20px 0 5px; white-space: nowrap; font-size: 13px; }
.center .zoom { width: 45px; margin: 0 12px; }
.rule { width: 1px; height: 14px; margin-right: 12px; background: #6c6f72; }
.zoom + .tool { margin-right: 12px; }
.wide { margin: 0 16px 0 8px; }
.wide svg, .turn svg { width: 20px; height: 20px; }

.viewer { display: flex; flex: 1; min-height: 0; background: #525659; }
.sidebar { display: flex; width: 300px; flex: none; background: #323639; }
.rail { width: 56px; padding-top: 12px; }
.rail-btn { width: 56px; height: 36px; margin-bottom: 24px; padding-left: 12px; }
.rail-btn.on { border-left: 4px solid #8ab4f8; border-radius: 0 4px 4px 0; padding-left: 8px; }
.thumbs { display: flex; flex-direction: column; align-items: center; flex: 1; overflow: hidden; padding: 18px 19px 0 0; }
.thumb { width: 120px; border: 6px solid transparent; }
.thumb svg { display: block; width: 108px; height: 152px; background: #fff; opacity: 0.5; }
.thumb.current { border-color: #8ab4f8; }
.thumb.current svg { opacity: 1; }
.thumb-no { height: 24px; margin-bottom: 13px; flex: none; font: 500 14px/24px Roboto, sans-serif; color: #fff; }

.scrollbar { display: flex; flex-direction: column; align-items: center; width: 17px; flex: none; background: #f1f1f1; }
.arrow { border: 4px solid transparent; }
.arrow.up { border-top: 0; border-bottom-color: #a3a3a3; margin: 7px 0 6px; }
.arrow.dark { border-bottom-color: #505050; }
.arrow.down { border-bottom: 0; border-top-color: #505050; margin: auto 0 7px; }
.knob { width: 13px; background: #c1c1c1; flex: none; }
.side-knob { height: 221px; }
.page-knob { height: 27px; margin-top: 160px; }

.canvas { flex: 1; min-width: 0; overflow: hidden; padding-top: 17px; }
.page { max-width: 1189px; height: 1683px; margin: 0 auto; padding: 56px 46px 0 44px; background: #fff; box-shadow: 0 0 10px #0008; }
table { width: 100%; border-collapse: collapse; table-layout: fixed; font-family: "Liberation Serif", serif; color: #000; }
td { border: 1px solid #000; padding: 0; vertical-align: top; }
.variant { margin: 0 0 1px 10px; font-size: 28px; line-height: 32px; }
.circuit { display: block; overflow: visible; }
.line { fill: none; stroke: #444; stroke-width: 2; }
.bubble { fill: #fff; stroke: #222; stroke-width: 2; }
.bubble.thin { stroke-width: 1; }
.sign { font-size: 16px; font-weight: 700; fill: #333; text-anchor: middle; }
.input { font-size: 18px; font-weight: 700; font-style: italic; fill: #222; }
.output { font-size: 17px; font-style: italic; fill: #555; }
.sub { font-size: 13px; font-style: normal; }

.taskbar { display: flex; height: 30px; flex: none; background: #000; color: #fff; }
.sys { width: 36px; }
.apps { display: flex; margin-left: 2px; }
.app { position: relative; width: 37px; }
.app.focused { background: #333; }
.app.running::after { content: ""; position: absolute; left: 4px; right: 4px; bottom: 0; height: 2px; background: #76b9ed; }
.app.focused::after { left: 0; right: 0; }
.tray { display: flex; align-items: center; gap: 8px; margin-left: auto; padding-right: 4px; }
.count { width: 16px; height: 16px; border-radius: 8px; background: #2f9fd8; display: flex; align-items: flex-end; justify-content: flex-end; }
.count b { width: 12px; height: 11px; border-radius: 3px; background: #8a8a8a; color: #fff; font-size: 8px; line-height: 11px; font-weight: 400; text-align: center; }
.lang { margin-left: 2px; }
.tray time { margin: 0 9px 0 4px; }
.notice { height: 30px; padding-right: 19px; border-right: 1px solid #555; }
</style>
